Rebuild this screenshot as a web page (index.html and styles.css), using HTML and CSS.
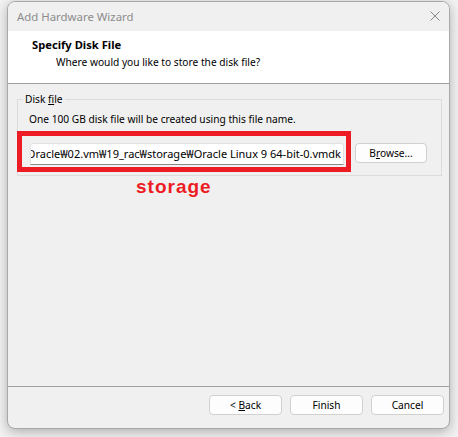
FILE: index.html
```html
<!DOCTYPE html>
<html>
<head>
<meta charset="utf-8">
<link rel="stylesheet" href="styles.css">
</head>
<body>
<div class="window">
  <div class="titlebar">
    <span class="title">Add Hardware Wizard</span>
    <svg class="close" width="10" height="10" viewBox="0 0 10 10"><path d="M0.5 0.5 L9.5 9.5 M9.5 0.5 L0.5 9.5" stroke="#8a8a8a" stroke-width="1" fill="none"/></svg>
  </div>
  <div class="header">
    <div class="h-title">Specify Disk File</div>
    <div class="h-sub">Where would you like to store the disk file?</div>
  </div>
  <div class="content">
    <fieldset class="group">
      <legend>Disk <u>f</u>ile</legend>
      <div class="desc">One 100 GB disk file will be created using this file name.</div>
      <div class="row">
        <div class="input"><span class="input-text">D:₩Oracle₩02.vm₩19_rac₩storage₩Oracle Linux 9 64-bit-0.vmdk</span></div>
        <button class="btn browse">B<u>r</u>owse...</button>
      </div>
    </fieldset>
  </div>
  <div class="footer">
    <button class="btn">&lt; <u>B</u>ack</button>
    <button class="btn">Finish</button>
    <button class="btn">Cancel</button>
  </div>
</div>
<div class="annot-box"></div>
<div class="annot-label">storage</div>
</body>
</html>
```
FILE: styles.css
```css
html, body {
  margin: 0;
  padding: 0;
}
body {
  width: 458px;
  height: 437px;
  background: #f2f2f2;
  padding: 1px 0 0 7px;
  box-sizing: border-box;
  position: relative;
  overflow: hidden;
  font-family: "Segoe UI", "Noto Sans", sans-serif;
  font-size: 10.2px;
  color: #000;
}
.window {
  width: 443px;
  height: 428px;
  box-sizing: border-box;
  border: 1px solid #a8a8a8;
  border-radius: 8px;
  background: #f0f0f0;
  box-shadow: 0 3px 12px rgba(0,0,0,0.28);
  display: flex;
  flex-direction: column;
  overflow: hidden;
}
.titlebar {
  height: 29px;
  flex: none;
  display: flex;
  align-items: center;
  justify-content: space-between;
  padding: 0 9px 0 9px;
  background: #f0f0f0;
}
.title {
  color: #8c8c8c;
  font-size: 11.4px;
  line-height: 16px;
}
.close {
  display: block;
  margin-top: -1px;
}
.header {
  height: 52px;
  flex: none;
  background: #fff;
  border-bottom: 1px solid #a0a0a0;
  box-sizing: content-box;
}
.h-title {
  font-weight: bold;
  font-size: 11.2px;
  padding: 6px 0 0 24px;
  line-height: 16px;
}
.h-sub {
  padding: 1px 0 0 48px;
  line-height: 16px;
}
.content {
  flex: 1;
  padding: 7px 7px 0 9px;
}
.group {
  margin: 0;
  border: 1px solid #dcdcdc;
  padding: 4px 13px 10px 11px;
}
.group legend {
  margin-left: -6px;
  padding: 0 2px;
  line-height: 16px;
}
.desc {
  line-height: 16px;
}
.row {
  display: flex;
  align-items: center;
  gap: 11px;
  margin-top: 16px;
  padding-left: 1px;
}
.input {
  width: 314px;
  height: 22px;
  box-sizing: border-box;
  background: #fff;
  border: 1px solid #e2e2e2;
  border-bottom: 1px solid #8a8a8a;
  border-radius: 3px 3px 0 0;
  display: flex;
  justify-content: flex-end;
  align-items: center;
  overflow: hidden;
  white-space: nowrap;
  padding-right: 2px;
}
.input-text {
  color: #000;
  font-size: 11px;
  line-height: 16px;
}
.btn {
  font-family: inherit;
  font-size: 10.2px;
  width: 73px;
  height: 20px;
  padding: 0;
  line-height: 16px;
  background: #fdfdfd;
  border: 1px solid #d0d0d0;
  border-radius: 4px;
  color: #000;
}
.browse {
  width: 72px;
  margin-top: -3px;
}
.footer {
  height: 33px;
  flex: none;
  border-top: 1px solid #a0a0a0;
  display: flex;
  justify-content: flex-end;
  align-items: flex-start;
  gap: 8px;
  padding: 8px 5px 0 0;
  box-sizing: content-box;
}
.annot-box {
  position: absolute;
  left: 17px;
  top: 131px;
  width: 334px;
  height: 41px;
  box-sizing: border-box;
  border: 5px solid #ed1c24;
}
.annot-label {
  position: absolute;
  left: 136px;
  top: 176px;
  font-family: "Liberation Sans", Arial, sans-serif;
  font-weight: bold;
  font-size: 19px;
  letter-spacing: 1px;
  line-height: 22px;
  color: #ed1c24;
}
```
